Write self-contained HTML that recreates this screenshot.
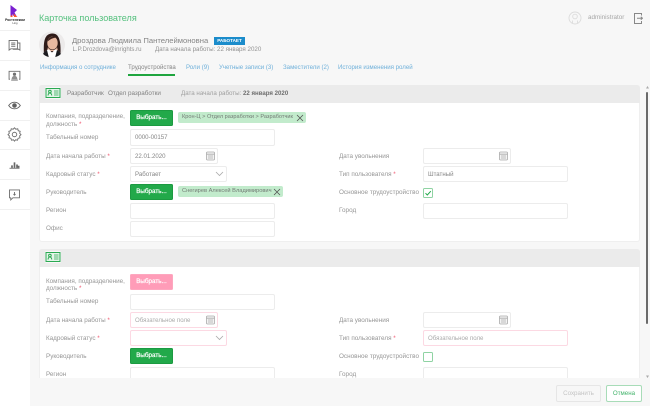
<!DOCTYPE html>
<html lang="ru"><head><meta charset="utf-8"><title>Карточка пользователя</title>
<style>
html,body{margin:0;padding:0}
body{width:650px;height:406px;overflow:hidden;position:relative;background:#f7f7f7;font-family:"Liberation Sans",sans-serif;color:#8a8a8a;font-size:6.3px}
#p{position:absolute;left:0;top:0;width:650px;height:406px;overflow:hidden;filter:blur(.3px)}
#p div,#p svg{position:absolute}
.t{white-space:nowrap;line-height:10px;height:10px}
.l{white-space:nowrap;line-height:9px;left:46px;font-size:6.3px;color:#969696}
.r{left:339px;font-size:6.35px}
.s{color:#f0566f}
.i{background:#fff;border:1px solid #ececec;border-radius:2px;box-sizing:border-box;color:#858585;font-size:6.1px;line-height:15px;padding-left:4px;white-space:nowrap}
.e{border-color:#fcd9e3;color:#aaa}
.b{left:130px;width:43px;height:16px;background:#22a94a;color:#fff;border-radius:1.5px;font-size:6.3px;-webkit-text-stroke:.2px #fff;line-height:14px;text-align:center;border:1px solid #1c9a41;box-sizing:border-box}
.sep{left:0;width:30px;height:1px;background:#f0f0f0}
.tag{background:#c2ebcc;color:#737b75;border-radius:2px;font-size:5.7px;line-height:11px;height:11px;padding-left:4px;white-space:nowrap;box-sizing:border-box}
.tab{top:63px;color:#6fb0da;font-size:6.1px;line-height:10px;white-space:nowrap}
</style></head><body><div id="p">

<div style="left:0;top:0;width:30px;height:406px;background:#fff"></div>
<div class="sep" style="top:30px"></div><div class="sep" style="top:60px"></div><div class="sep" style="top:90px"></div><div class="sep" style="top:120px"></div><div class="sep" style="top:149px"></div><div class="sep" style="top:179px"></div><div class="sep" style="top:209px"></div>

<svg style="left:9px;top:4px" width="10" height="14" viewBox="0 0 10 14"><path d="M1.500 1L8 6 5.500 8.500 7.500 12H4.500L3.500 10V13H1.500z" fill="#7a1fd1"/><path d="M1.500 11.500h2V13h-2z" fill="#ff5a2a"/><path d="M4.500 9.500L8.500 13H5z" fill="#ff5a2a"/></svg>
<div class="t" style="left:3px;top:15px;font-size:3.4px;color:#222;width:24px;text-align:center;font-weight:bold">Ростелеком</div>
<div class="t" style="left:3px;top:19px;font-size:2.6px;color:#333;width:24px;text-align:center">Ling</div>

<svg style="left:7px;top:38px" width="15" height="15" viewBox="0 0 18 18" fill="none" stroke="#707070" stroke-width="1.100"><path d="M2.500 3h10v10h-8l-2 1.500z"/><path d="M5 6h5M5 8h5M5 10h5"/><path d="M13 6h2.500v8.500l-1.500-1H7"/></svg>
<svg style="left:7px;top:68px" width="15" height="15" viewBox="0 0 18 18" fill="none" stroke="#707070" stroke-width="1.100"><path d="M3.500 13.500H2.500V4h13v9.500h-1"/><path d="M5 14.500h8"/><circle cx="9" cy="7.500" r="1.400" fill="#707070"/><path d="M5.500 13.500c.3-3 1.800-4 3.500-4s3.200 1 3.500 4z" fill="#909090" stroke="none"/></svg>
<svg style="left:7px;top:98px" width="15" height="15" viewBox="0 0 18 18" fill="none" stroke="#606060" stroke-width="1.100"><path d="M2 9c2-2.800 4.300-4 7-4s5 1.200 7 4c-2 2.800-4.300 4-7 4s-5-1.200-7-4z"/><circle cx="9" cy="9" r="2.200" fill="#606060"/></svg>
<svg style="left:7px;top:127px" width="15" height="15" viewBox="0 0 18 18" fill="none" stroke="#707070" stroke-width="1.100"><path d="M9 1.800l1.600 1.700 2.300-.5.600 2.300 2.300.7-.6 2.300L16.800 10l-1.700 1.500.5 2.300-2.300.6-.7 2.300-2.300-.6L9 17.800l-1.300-1.700-2.300.6-.7-2.300-2.300-.6.500-2.300L1.200 10l1.600-1.700-.6-2.300 2.300-.7.600-2.300 2.300.5z" transform="translate(0 -.8)"/><circle cx="9" cy="9" r="2.700"/></svg>
<svg style="left:7px;top:157px" width="15" height="15" viewBox="0 0 18 18" fill="#666"><path d="M3 13h12v1H3z"/><path d="M5 10h2v3H5zM8 6.500h2V13H8zM11 9h2v4h-2zM13 10.500h2V13h-2z"/></svg>
<svg style="left:7px;top:187px" width="15" height="15" viewBox="0 0 18 18" fill="none" stroke="#707070" stroke-width="1.100"><path d="M3 3.500h12v9.500H7l-2.500 2.500V13H3z"/><path d="M9 6v3.500M7.800 8.500L9 9.800l1.200-1.300"/></svg>

<div class="t" style="left:39px;top:12px;font-size:9.050px;line-height:12px;height:12px;color:#55c07e">Карточка пользователя</div>

<svg style="left:39px;top:31px" width="26" height="27" viewBox="0 0 26 27"><defs><clipPath id="c"><circle cx="13" cy="13.500" r="13"/></clipPath></defs><g clip-path="url(#c)"><rect width="26" height="27" fill="#eceaea"/><path d="M5 24C4 9 6 3 13 2.500c7-.5 9 7 8.500 21z" fill="#2e1a18"/><ellipse cx="13.500" cy="12" rx="5.200" ry="6.500" fill="#e8b8a0"/><path d="M8.500 10.500c1-5 6-6 9.500-4-2.500 0-6 1-9.500 4z" fill="#3a211c"/><path d="M9 16c1 4 8 4 9 0l1 4H8z" fill="#e8b8a0"/><path d="M3 27c.5-5 3.500-8 7-8.500l3 3 3-3c3.500.5 6.500 3.500 7 8.500z" fill="#fff"/><path d="M3 27c.5-4 2-6.500 5-8l2 8zM23 27c-.5-4-2-6.500-5-8l-2 8z" fill="#1b1b1f"/></g></svg>

<div class="t" style="left:72px;top:36px;font-size:7.650px;color:#858585">Дроздова Людмила Пантелеймоновна</div>
<div style="left:214px;top:37px;width:31px;height:8px;background:#1b8ccb;color:#fff;font-size:4.6px;font-weight:bold;line-height:8px;text-align:center">РАБОТАЕТ</div>
<div class="t" style="left:72.500px;top:45px;font-size:6.100px;color:#929292">L.P.Drozdova@inrights.ru</div>
<div class="t" style="left:155px;top:45px;font-size:6.200px;color:#929292">Дата начала работы: 22 января 2020</div>

<div class="tab" style="left:40px">Информация о сотруднике</div>
<div class="tab" style="left:128px;color:#858585">Трудоустройства</div>
<div style="left:128px;top:74px;width:47px;height:2px;background:#1fa53f"></div>
<div class="tab" style="left:186px">Роли (9)</div>
<div class="tab" style="left:219px">Учетные записи (3)</div>
<div class="tab" style="left:283px">Заместители (2)</div>
<div class="tab" style="left:338px">История изменения ролей</div>

<svg style="left:645px;top:85px" width="5" height="5" viewBox="0 0 5 5"><path d="M2.500 1L4 3.500H1z" fill="#aaa"/></svg>
<div style="left:646px;top:92px;width:2px;height:232px;background:#6a6a6a;border-radius:1px"></div>
<svg style="left:645px;top:374px" width="5" height="5" viewBox="0 0 5 5"><path d="M2.500 4L4 1.500H1z" fill="#aaa"/></svg>

<div style="left:39px;top:85px;width:601px;height:157px;background:#fff;border:1px solid #efefef;border-top:0;box-sizing:border-box;border-radius:3px"></div>
<div style="left:39px;top:85px;width:601px;height:18px;background:#ebebeb;border-radius:3px 3px 0 0"></div>
<svg style="left:45px;top:87px" width="16" height="12" viewBox="0 0 16 12" fill="none"><rect x="0" y="0" width="16" height="12" rx="1.500" fill="#fff" opacity=".7"/><rect x="1" y="1.500" width="14" height="9" fill="#e4f5e9" stroke="#2aa952"/><path d="M3 8.500c.3-1.800 1-2.500 1.800-2.500s1.700.7 2 2.500" stroke="#2aa952"/><circle cx="4.900" cy="4.500" r="1.300" stroke="#2aa952"/><path d="M9 4h4.500M9 6h4.500M9 8h4.500" stroke="#2aa952" stroke-width=".8"/></svg>
<div class="t" style="left:67px;top:89px;font-size:6.300px;color:#808080">Разработчик</div>
<div class="t" style="left:108px;top:89px;font-size:6.300px;color:#808080">Отдел разработки</div>
<div class="t" style="left:181px;top:89px;font-size:6.200px;color:#a0a0a0">Дата начала работы:</div>
<div class="t" style="left:243px;top:89px;font-size:6.100px;color:#6e6e6e;font-weight:bold">22 января 2020</div>

<div class="l" style="top:112px">Компания, подразделение,</div>
<div class="l" style="top:120px">должность <span class="s">*</span></div>
<div class="b" style="top:110px">Выбрать...</div>
<div class="tag" style="left:178px;top:112px;width:128px;font-size:5.600px">Крон-Ц &gt; Отдел разработки &gt; Разработчик</div>
<svg style="left:296px;top:114px" width="8" height="8" viewBox="0 0 8 8" stroke="#555" stroke-width=".8"><path d="M1 1l6 6M7 1L1 7"/></svg>

<div class="l" style="top:133px">Табельный номер</div>
<div class="i" style="left:130px;top:129px;width:145px;height:17px">0000-00157</div>
<div class="l" style="top:152px">Дата начала работы <span class="s">*</span></div>
<div class="i" style="left:130px;top:148px;width:88px;height:16px">22.01.2020</div>
<svg style="left:205px;top:151px" width="11" height="10" viewBox="0 0 11 10" fill="none" stroke="#aaa" stroke-width=".8"><rect x="1.500" y="1" width="8" height="8" rx="1" fill="#f3f3f3"/><path d="M1.500 3.200h8M3 5h5M3 7h5"/></svg>
<div class="l" style="top:170px">Кадровый статус <span class="s">*</span></div>
<div class="i" style="left:130px;top:166px;width:97px;height:16px">Работает</div>
<svg style="left:215px;top:171px" width="9" height="6" viewBox="0 0 9 6" fill="none" stroke="#aaa" stroke-width=".8"><path d="M1 1l3.500 3.500L8 1"/></svg>
<div class="l" style="top:188px">Руководитель</div>
<div class="b" style="top:184px">Выбрать...</div>
<div class="tag" style="left:178px;top:186px;width:105px">Снегирев Алексей Владимирович</div>
<svg style="left:273px;top:188px" width="8" height="8" viewBox="0 0 8 8" stroke="#555" stroke-width=".8"><path d="M1 1l6 6M7 1L1 7"/></svg>
<div class="l" style="top:206px">Регион</div>
<div class="i" style="left:130px;top:203px;width:145px;height:16px"></div>
<div class="l" style="top:224px">Офис</div>
<div class="i" style="left:130px;top:221px;width:145px;height:16px"></div>

<div class="l r" style="top:152px">Дата увольнения</div>
<div class="i" style="left:423px;top:148px;width:88px;height:16px"></div>
<svg style="left:498px;top:151px" width="11" height="10" viewBox="0 0 11 10" fill="none" stroke="#aaa" stroke-width=".8"><rect x="1.500" y="1" width="8" height="8" rx="1" fill="#f3f3f3"/><path d="M1.500 3.200h8M3 5h5M3 7h5"/></svg>
<div class="l r" style="top:170px">Тип пользователя <span class="s">*</span></div>
<div class="i" style="left:423px;top:166px;width:145px;height:16px">Штатный</div>
<div class="l r" style="top:188px">Основное трудоустройство</div>
<div style="left:423px;top:188px;width:10px;height:10px;box-sizing:border-box;border:1px solid #8fd3a3;border-radius:1.500px;background:#fff"></div>
<svg style="left:423px;top:188px" width="10" height="10" viewBox="0 0 10 10" fill="none" stroke="#22a94a" stroke-width="1"><path d="M2.500 5.200L4.300 7 7.800 3.200"/></svg>
<div class="l r" style="top:206px">Город</div>
<div class="i" style="left:423px;top:203px;width:145px;height:16px"></div>

<div style="left:39px;top:249px;width:601px;height:135px;background:#fff;border:1px solid #efefef;box-sizing:border-box;border-radius:3px"></div>
<div style="left:39px;top:249px;width:601px;height:18px;background:#ebebeb;border-radius:3px 3px 0 0"></div>
<svg style="left:45px;top:251px" width="16" height="12" viewBox="0 0 16 12" fill="none"><rect x="0" y="0" width="16" height="12" rx="1.500" fill="#fff" opacity=".7"/><rect x="1" y="1.500" width="14" height="9" fill="#e4f5e9" stroke="#2aa952"/><path d="M3 8.500c.3-1.800 1-2.500 1.800-2.500s1.700.7 2 2.500" stroke="#2aa952"/><circle cx="4.900" cy="4.500" r="1.300" stroke="#2aa952"/><path d="M9 4h4.500M9 6h4.500M9 8h4.500" stroke="#2aa952" stroke-width=".8"/></svg>

<div class="l" style="top:277px">Компания, подразделение,</div>
<div class="l" style="top:284px">должность <span class="s">*</span></div>
<div class="b" style="top:274px;background:#ff9cb8;border-color:#fda7bf">Выбрать...</div>
<div class="l" style="top:297px">Табельный номер</div>
<div class="i" style="left:130px;top:294px;width:145px;height:16px"></div>
<div class="l" style="top:316px">Дата начала работы <span class="s">*</span></div>
<div class="i e" style="left:130px;top:312px;width:88px;height:16px">Обязательное поле</div>
<svg style="left:205px;top:315px" width="11" height="10" viewBox="0 0 11 10" fill="none" stroke="#aaa" stroke-width=".8"><rect x="1.500" y="1" width="8" height="8" rx="1" fill="#f3f3f3"/><path d="M1.500 3.200h8M3 5h5M3 7h5"/></svg>
<div class="l" style="top:334px">Кадровый статус <span class="s">*</span></div>
<div class="i e" style="left:130px;top:330px;width:97px;height:16px"></div>
<svg style="left:215px;top:335px" width="9" height="6" viewBox="0 0 9 6" fill="none" stroke="#aaa" stroke-width=".8"><path d="M1 1l3.500 3.500L8 1"/></svg>
<div class="l" style="top:352px">Руководитель</div>
<div class="b" style="top:348px">Выбрать...</div>
<div class="l" style="top:370px">Регион</div>
<div class="i" style="left:130px;top:367px;width:145px;height:16px"></div>

<div class="l r" style="top:316px">Дата увольнения</div>
<div class="i" style="left:423px;top:312px;width:88px;height:16px"></div>
<svg style="left:498px;top:315px" width="11" height="10" viewBox="0 0 11 10" fill="none" stroke="#aaa" stroke-width=".8"><rect x="1.500" y="1" width="8" height="8" rx="1" fill="#f3f3f3"/><path d="M1.500 3.200h8M3 5h5M3 7h5"/></svg>
<div class="l r" style="top:334px">Тип пользователя <span class="s">*</span></div>
<div class="i e" style="left:423px;top:330px;width:145px;height:16px">Обязательное поле</div>
<div class="l r" style="top:352px">Основное трудоустройство</div>
<div style="left:423px;top:352px;width:10px;height:10px;box-sizing:border-box;border:1px solid #8fd3a3;border-radius:1.500px;background:#fff"></div>
<div class="l r" style="top:370px">Город</div>
<div class="i" style="left:423px;top:367px;width:145px;height:16px"></div>

<div style="left:30px;top:378px;width:620px;height:28px;background:#f7f7f7"></div>
<div style="left:556px;top:385px;width:45px;height:17px;box-sizing:border-box;border:1px solid #e6e6e6;border-radius:2px;color:#c4c4c4;font-size:6.200px;line-height:15px;text-align:center">Сохранить</div>
<div style="left:606px;top:385px;width:36px;height:17px;box-sizing:border-box;border:1px solid #a8dcb8;border-radius:2px;color:#43b36b;background:#fff;font-size:6.200px;line-height:15px;text-align:center">Отмена</div>

<svg style="left:568px;top:11px" width="14" height="14" viewBox="0 0 14 14" fill="none" stroke="#dcdcdc" stroke-width=".9"><circle cx="7" cy="7" r="6"/><circle cx="7" cy="5.500" r="2.300"/><path d="M4.500 12.500V9.500M9.500 12.500V9.500"/></svg>
<div class="t" style="left:588px;top:13px;font-size:6.300px;color:#a6a6a6">administrator</div>
<svg style="left:633px;top:12px" width="10" height="13" viewBox="0 0 10 13" fill="none" stroke="#888" stroke-width="1"><path d="M8.500 3.500V1.500H1.500v10h7V9"/><path d="M4 6.200h5.500M7.800 4.700l1.700 1.500-1.700 1.500"/></svg>

</div></body></html>
